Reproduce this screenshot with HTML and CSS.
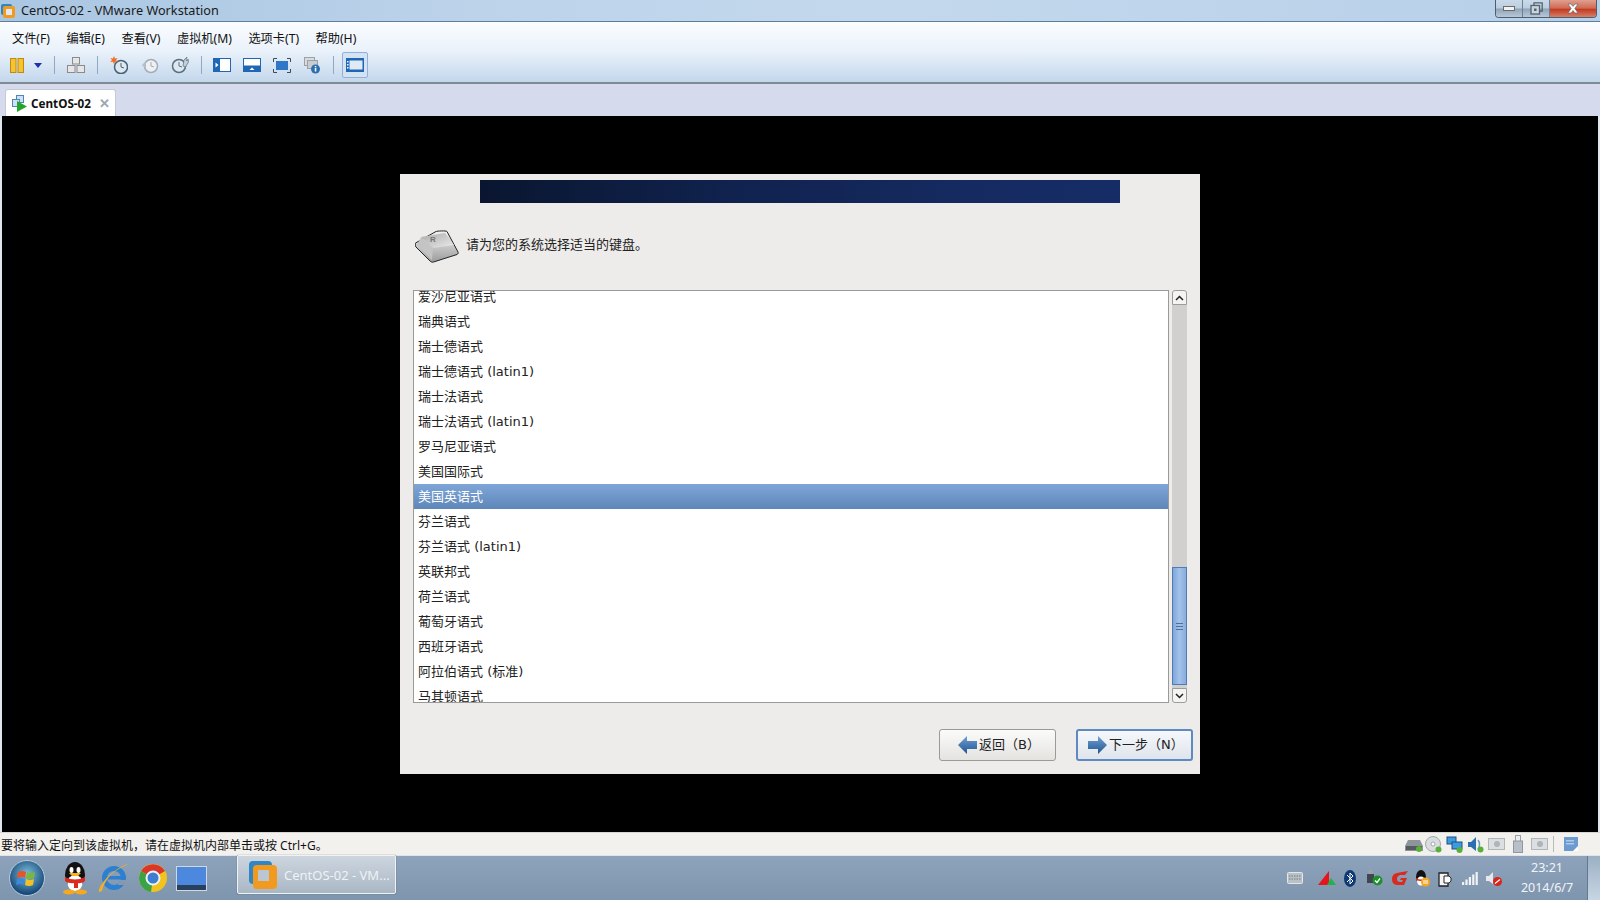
FILE: index.html
```html
<!DOCTYPE html>
<html lang="zh-CN">
<head>
    <meta charset="UTF-8">
    <title>CentOS-02 - VMware Workstation</title>
    <link rel="stylesheet" href="styles.css">
</head>
<body>

<div class="titlebar">
    <svg class="app-icon" width="16" height="16" viewBox="0 0 16 16"><rect x="1" y="1" width="11" height="11" rx="2" fill="#2f86c5"/><rect x="3" y="3" width="12" height="12" rx="2" fill="#f29a1f"/><rect x="6" y="6" width="6" height="6" fill="#dfe9f2"/></svg>
    <span class="title-text">CentOS-02 - VMware Workstation</span>
    <div class="win-buttons">
        <div class="win-btn btn-min"><span class="min-glyph"></span></div>
        <div class="win-btn btn-max">
            <svg width="13" height="13" viewBox="0 0 13 13"><path d="M4 3V.8h8.200V9H10" fill="none" stroke="#56636f" stroke-width="1.300"/><rect x="1" y="3.500" width="8.500" height="8.500" fill="#c8d4de" stroke="#56636f" stroke-width="1.300"/><rect x="4" y="6.500" width="2.500" height="2.500" fill="#56636f"/></svg>
        </div>
        <div class="win-btn btn-close">
            <svg width="14" height="11" viewBox="0 0 14 11"><path d="M2 1h3l2 2.400L9 1h3L8.800 5.500 12 10H9L7 7.600 5 10H2l3.200-4.500z" fill="#fff" stroke="#6b6b6b" stroke-width=".7"/></svg>
        </div>
    </div>
</div>

<div class="chrome">
    <div class="menubar">
        <span class="menu-item">文件(F)</span>
        <span class="menu-item">编辑(E)</span>
        <span class="menu-item">查看(V)</span>
        <span class="menu-item">虚拟机(M)</span>
        <span class="menu-item">选项卡(T)</span>
        <span class="menu-item">帮助(H)</span>
    </div>
    <div class="toolbar">
        <svg class="tool tool-pause" width="14" height="15" viewBox="0 0 14 15"><rect x=".5" y=".5" width="5.500" height="14" fill="#f5c432" stroke="#c08a10"/><rect x="8" y=".5" width="5.500" height="14" fill="#f5c432" stroke="#c08a10"/></svg>
        <svg class="tool tool-drop" width="8" height="5" viewBox="0 0 8 5"><path d="M0 0h8L4 5z" fill="#1c2fb0"/></svg>
        <span class="tool-sep sep-a"></span>
        <svg class="tool tool-net" width="18" height="16" viewBox="0 0 18 16"><g fill="#e6e6e6" stroke="#8b8b8b"><rect x="5.500" y=".5" width="7" height="6.500"/><rect x=".5" y="8.500" width="7.500" height="7"/><rect x="10" y="8.500" width="7.500" height="7"/></g></svg>
        <span class="tool-sep sep-b"></span>
        <svg class="tool tool-clock" width="18" height="18" viewBox="0 0 18 18"><circle cx="11" cy="11" r="6.500" fill="#dfe8ee" stroke="#45627c" stroke-width="1.500"/><path d="M11 7v4l3 1" fill="none" stroke="#45627c"/><path d="M4 0l1 2.500L7.500 2 6 4.200 8 6 5 5.800 4 8.500 3 5.800 0 6l2-1.800L.5 2 3 2.500z" fill="#f0702a"/></svg>
        <svg class="tool tool-clock2" width="18" height="18" viewBox="0 0 18 18"><circle cx="10" cy="10" r="6.500" fill="#eef1f3" stroke="#a3acb3" stroke-width="1.500"/><path d="M10 6v4l3 1" fill="none" stroke="#a3acb3"/><path d="M1 9l4-4v8z" fill="#b6bdc3"/></svg>
        <svg class="tool tool-clock3" width="18" height="18" viewBox="0 0 18 18"><circle cx="8" cy="10" r="6.500" fill="#dfe8ee" stroke="#55707f" stroke-width="1.500"/><path d="M8 6v4l3 1" fill="none" stroke="#55707f"/><path d="M12 10l1-6 3-3-1 3 1 1 1-2 .5 3-3 5z" fill="#c4d0d8" stroke="#55707f" stroke-width=".7"/></svg>
        <span class="tool-sep sep-c"></span>
        <svg class="tool tool-view1" width="18" height="14" viewBox="0 0 18 14"><rect width="18" height="14" fill="#1f66b5"/><rect x="7" y="1" width="10" height="12" fill="#fff"/><path d="M2.500 4.500l3 2.500-3 2.500z" fill="#fff"/></svg>
        <svg class="tool tool-view2" width="18" height="14" viewBox="0 0 18 14"><rect width="18" height="14" fill="#1f66b5"/><rect x="1" y="1" width="16" height="6.500" fill="#fff"/><path d="M6.500 12l2.500-2.500 2.500 2.500z" fill="#fff"/></svg>
        <svg class="tool tool-full" width="18" height="15" viewBox="0 0 18 15"><rect x="3" y="3" width="12" height="9" fill="#2f78c8"/><path d="M.5 4V.5H4M14 .5h3.500V4M17.500 11v3.500H14M4 14.500H.5V11" fill="none" stroke="#3d4a58"/></svg>
        <svg class="tool tool-info" width="17" height="17" viewBox="0 0 17 17"><rect x=".5" y=".5" width="10" height="8" fill="#d8dcdf" stroke="#9aa2a8"/><rect x="3.500" y="3.500" width="10" height="8" fill="#c8cdd1" stroke="#9aa2a8"/><circle cx="11.500" cy="12" r="4.500" fill="#2c6fae"/><rect x="10.800" y="11" width="1.500" height="3.500" fill="#fff"/><rect x="10.800" y="9" width="1.500" height="1.300" fill="#fff"/></svg>
        <span class="tool-sep sep-d"></span>
        <div class="tool-active">
            <svg width="18" height="14" viewBox="0 0 18 14"><rect width="18" height="14" fill="#1f66b5"/><rect x="3.500" y="2.500" width="13" height="9" fill="#dfeaf5"/><rect x="1" y="3" width="1.500" height="1.500" fill="#fff"/><rect x="1" y="6" width="1.500" height="1.500" fill="#fff"/><rect x="1" y="9" width="1.500" height="1.500" fill="#fff"/></svg>
        </div>
    </div>
</div>

<div class="tabbar">
    <div class="tab">
        <svg class="tab-icon" width="16" height="17" viewBox="0 0 16 17"><g fill="#cfe2f3" stroke="#4b86bd"><rect x="4.500" y=".5" width="7" height="7"/><rect x=".5" y="4.500" width="7" height="7"/></g><path d="M5 6l10 5.500L5 17z" fill="#25a52a"/></svg>
        <span class="tab-name">CentOS-02</span>
        <span class="tab-close">✕</span>
    </div>
</div>

<div class="vm-area">
    <div class="installer">
        <div class="banner"></div>
        <div class="prompt">
            <svg class="key-icon" width="46" height="36" viewBox="0 0 46 36">
                <defs>
                    <linearGradient id="keyTop" x1="0" y1="0" x2="1" y2="1"><stop offset="0" stop-color="#a9a9a9"/><stop offset="1" stop-color="#ececec"/></linearGradient>
                    <linearGradient id="keyFront" x1="0" y1="0" x2="0" y2="1"><stop offset="0" stop-color="#f3f3f3"/><stop offset="1" stop-color="#9b9b9b"/></linearGradient>
                </defs>
                <path d="M.5 14L21 2.500c1-.5 10-1 11 0L43 23c.5 1 0 2-1 2.500L18.500 33c-1 .5-2 0-3-.5L1 18c-1-1-1-3-.5-4z" fill="url(#keyFront)" stroke="#222"/>
                <path d="M6 8l24-4 9 12-21 3z" fill="url(#keyTop)"/>
                <path d="M6 8l12 11-1 12L2 16z" fill="#c4c4c4"/>
                <text class="key-letter" x="15" y="13">R</text>
            </svg>
            <span class="prompt-text">请为您的系统选择适当的键盘。</span>
        </div>
        <div class="list-wrap">
            <div class="list-box">
                <ul class="kb-list">
                    <li>爱沙尼亚语式</li>
                    <li>瑞典语式</li>
                    <li>瑞士德语式</li>
                    <li>瑞士德语式 (latin1)</li>
                    <li>瑞士法语式</li>
                    <li>瑞士法语式 (latin1)</li>
                    <li>罗马尼亚语式</li>
                    <li>美国国际式</li>
                    <li class="selected">美国英语式</li>
                    <li>芬兰语式</li>
                    <li>芬兰语式 (latin1)</li>
                    <li>英联邦式</li>
                    <li>荷兰语式</li>
                    <li>葡萄牙语式</li>
                    <li>西班牙语式</li>
                    <li>阿拉伯语式 (标准)</li>
                    <li>马其顿语式</li>
                </ul>
            </div>
            <div class="scrollbar">
                <div class="sb-arrow sb-up"><svg width="9" height="6" viewBox="0 0 9 6"><path d="M1 5l3.500-3.500L8 5" fill="none" stroke="#222" stroke-width="1.500"/></svg></div>
                <div class="sb-track">
                    <div class="sb-thumb"><span class="grip"></span></div>
                </div>
                <div class="sb-arrow sb-down"><svg width="9" height="6" viewBox="0 0 9 6"><path d="M1 1l3.500 3.500L8 1" fill="none" stroke="#222" stroke-width="1.500"/></svg></div>
            </div>
        </div>
        <div class="actions">
            <div class="btn">
                <svg width="19" height="20" viewBox="0 0 19 20"><defs><linearGradient id="arrowFill" x1="0" y1="0" x2="0" y2="1"><stop offset="0" stop-color="#6f9fd6"/><stop offset="1" stop-color="#22558f"/></linearGradient></defs><path d="M0 10l9-9v5h10v8H9v5z" fill="url(#arrowFill)"/></svg>
                <span class="btn-label">返回（B）</span>
            </div>
            <div class="btn btn-next">
                <svg width="19" height="20" viewBox="0 0 19 20"><path d="M19 10l-9-9v5H0v8h10v5z" fill="url(#arrowFill)"/></svg>
                <span class="btn-label">下一步（N）</span>
            </div>
        </div>
    </div>
</div>

<div class="statusbar">
    <span class="status-text">要将输入定向到该虚拟机，请在虚拟机内部单击或按 Ctrl+G。</span>
    <div class="status-icons">
        <svg class="st-icon st-hdd" width="18" height="15" viewBox="0 0 18 15"><path d="M3 3h12l3 6v5H0V9z" fill="#8d959b"/><rect x="1" y="9" width="16" height="4" fill="#545c62"/><circle cx="14" cy="12" r="3" fill="#56b03a"/></svg>
        <svg class="st-icon" width="17" height="17" viewBox="0 0 17 17"><circle cx="8" cy="8" r="7.500" fill="#d9dde0" stroke="#a4a9ad"/><circle cx="8" cy="8" r="2" fill="#fff" stroke="#a4a9ad"/><circle cx="13.500" cy="13.500" r="3" fill="#56b03a"/></svg>
        <svg class="st-icon" width="17" height="17" viewBox="0 0 17 17"><rect x="1" y="1" width="9" height="7" fill="#3b9ae0" stroke="#20507c"/><rect x="6" y="6" width="10" height="7" fill="#3b9ae0" stroke="#20507c"/><circle cx="13.500" cy="14" r="3" fill="#56b03a"/></svg>
        <svg class="st-icon" width="17" height="17" viewBox="0 0 17 17"><path d="M1 6h3l5-5v14l-5-4H1z" fill="#2c6fae"/><path d="M11 4c2 2 2 7 0 9" fill="none" stroke="#6d99c2" stroke-width="1.500"/><circle cx="13.500" cy="13.500" r="3" fill="#56b03a"/></svg>
        <svg class="st-icon cam" width="17" height="12" viewBox="0 0 17 12"><rect x=".5" y=".5" width="16" height="11" fill="#dbdfe2" stroke="#b0b5b9"/><circle cx="9" cy="6" r="3" fill="#aeb4b8"/></svg>
        <svg class="st-icon usb" width="10" height="18" viewBox="0 0 10 18"><rect x="2.500" y=".5" width="5" height="6" fill="#eee" stroke="#9ba2a8"/><rect x=".5" y="6" width="9" height="11.500" fill="#b7c0c8" stroke="#8f98a0"/></svg>
        <svg class="st-icon cam" width="17" height="12" viewBox="0 0 17 12"><rect x=".5" y=".5" width="16" height="11" fill="#dbdfe2" stroke="#b0b5b9"/><circle cx="9" cy="6" r="3" fill="#aeb4b8"/></svg>
        <span class="st-sep"></span>
        <svg class="st-icon" width="14" height="14" viewBox="0 0 14 14"><rect width="14" height="14" fill="#6d9bd0"/><rect x="2" y="3" width="8" height="1.500" fill="#aecbe9"/><rect x="2" y="6" width="8" height="1.500" fill="#aecbe9"/><path d="M14 14H9l5-5z" fill="#fff"/></svg>
    </div>
</div>

<div class="taskbar">
    <div class="orb">
        <svg width="36" height="36" viewBox="0 0 36 36">
            <defs>
                <radialGradient id="orbFill" cx=".5" cy=".4" r=".6"><stop offset="0" stop-color="#7fc1dd"/><stop offset="1" stop-color="#0e3f70"/></radialGradient>
            </defs>
            <circle cx="18" cy="18" r="17.500" fill="url(#orbFill)" stroke="#b9cbdb"/>
            <path d="M9 12q4-2 8 0l-1 6q-4-2-8 0z" fill="#e8532b"/>
            <path d="M18 12q4 2 8 0l-1 6q-4 2-8 0z" fill="#7ab73a"/>
            <path d="M8 19q4-2 8 0l-1 6q-4-2-8 0z" fill="#3d8ad8"/>
            <path d="M17 19q4 2 8 0l-1 6q-4 2-8 0z" fill="#f5c026"/>
        </svg>
    </div>
    <svg class="pin pin-qq" width="30" height="34" viewBox="0 0 30 34"><ellipse cx="15" cy="14" rx="10" ry="13" fill="#111"/><ellipse cx="15" cy="22" rx="7.500" ry="8" fill="#fff"/><ellipse cx="11.500" cy="9" rx="2" ry="3" fill="#fff"/><ellipse cx="18.500" cy="9" rx="2" ry="3" fill="#fff"/><path d="M9 12h12l-3 3h-6z" fill="#f7b51e"/><path d="M5 16q10 5 20 0v4q-5 3-7 2v5h-4v-5q-4 1-9-2z" fill="#dd2a1d"/><ellipse cx="9" cy="31" rx="6" ry="2.500" fill="#f7a81e"/><ellipse cx="21" cy="31" rx="6" ry="2.500" fill="#f7a81e"/></svg>
    <svg class="pin pin-ie" width="32" height="30" viewBox="0 0 32 30"><circle cx="16" cy="15" r="9.500" fill="none" stroke="#2d7fd0" stroke-width="5"/><rect x="10" y="13" width="15" height="3.500" fill="#2d7fd0"/><rect x="20" y="17" width="8" height="5" fill="#8499b1"/><path d="M1 29C-1 22 20 2 31 1c-5 2-9 4-12 6C8 14 5 24 4 28z" fill="#eeb02c"/></svg>
    <svg class="pin pin-chrome" width="28" height="28" viewBox="0 0 28 28"><circle cx="14" cy="14" r="14" fill="#f2c31d"/><path d="M14 14L2 7a14 14 0 0 1 24 0z" fill="#d9362c"/><path d="M14 14L2 7a14 14 0 0 0 10 21z" fill="#3aa346"/><circle cx="14" cy="14" r="6.500" fill="#3c7fd0" stroke="#eef2f5" stroke-width="2"/></svg>
    <svg class="pin pin-desk" width="31" height="25" viewBox="0 0 31 25"><rect width="31" height="25" fill="#cfd9e3"/><rect x="1" y="1" width="29" height="18" fill="#4b88de"/><rect x="1" y="19" width="29" height="5" fill="#2a3f5c"/></svg>
    <div class="task-btn">
        <svg width="30" height="30" viewBox="0 0 30 30"><rect x="1" y="1" width="23" height="23" rx="4" fill="#2f86c5"/><rect x="5" y="5" width="24" height="24" rx="4" fill="#f29a1f"/><rect x="10" y="10" width="11" height="11" fill="#bac6d1"/></svg>
        <span class="task-name">CentOS-02 - VM...</span>
    </div>
    <div class="tray">
        <svg class="tray-key" width="16" height="12" viewBox="0 0 16 12"><rect x=".5" y=".5" width="15" height="11" rx="1" fill="#b9c0c6" stroke="#e3e6e8"/><path d="M2 4h12M2 7h12" stroke="#6e7a85" stroke-dasharray="1.500 1"/></svg>
        <svg class="tray-tri" width="18" height="14" viewBox="0 0 18 14"><path d="M0 14L11 0v14z" fill="#e8141c"/><path d="M9 14l4-7 5 7z" fill="#22b14c"/></svg>
        <svg class="tray-bt" width="12" height="17" viewBox="0 0 12 17"><ellipse cx="6" cy="8.500" rx="6" ry="8.500" fill="#0d3a74"/><path d="M3 5l6 6-3 3V3l3 3-6 6" fill="none" stroke="#fff"/></svg>
        <svg class="tray-pow" width="17" height="16" viewBox="0 0 17 16"><rect x="1" y="4" width="7" height="9" fill="#3e4650"/><rect x="2.500" y="0" width="4" height="4" fill="#9aa3aa"/><circle cx="11.500" cy="10.500" r="5" fill="#1f8f2c"/><path d="M9 10.500l2 2 3-4" fill="none" stroke="#fff" stroke-width="1.300"/></svg>
        <svg class="tray-g" width="16" height="15" viewBox="0 0 16 15"><path d="M10 1L16 0l-3 4H8Q5 5 5 8t3 3h2l1-2H8l1-2h6l-3 7H6Q0 14 0 8q0-5 5-6z" fill="#d92a1c"/></svg>
        <svg class="tray-qq" width="16" height="17" viewBox="0 0 16 17"><ellipse cx="7" cy="7" rx="5" ry="7" fill="#111"/><ellipse cx="7" cy="11" rx="4" ry="4.500" fill="#fff"/><path d="M2 8q5 3 10 0v2q-5 2-10 0z" fill="#dd2a1d"/><circle cx="11.500" cy="12" r="4.500" fill="#f5a623"/><path d="M9 11h5M9 13h5" stroke="#fff"/></svg>
        <svg class="tray-plug" width="14" height="17" viewBox="0 0 14 17"><path d="M1 3h9v13H1z" fill="#f5f5f5" stroke="#222" stroke-width="1.300"/><path d="M6 6h5l2 2v3l-2 2H6z" fill="#fff" stroke="#222"/></svg>
        <svg class="tray-sig" width="16" height="13" viewBox="0 0 16 13"><g fill="#f1f3f5"><rect x="0" y="10" width="2.200" height="3"/><rect x="3.400" y="7.500" width="2.200" height="5.500"/><rect x="6.800" y="5" width="2.200" height="8"/><rect x="10.200" y="2.500" width="2.200" height="10.500"/><rect x="13.600" y="0" width="2.200" height="13"/></g></svg>
        <svg class="tray-vol" width="16" height="15" viewBox="0 0 16 15"><path d="M0 5h3l4-4v12l-4-3H0z" fill="#e6e9eb"/><circle cx="11.500" cy="10.500" r="4.500" fill="#d9241b"/><path d="M9 12.500l5-4" stroke="#fff" stroke-width="1.300"/></svg>
        <div class="clock">
            <span>23:21</span>
            <span>2014/6/7</span>
        </div>
    </div>
    <div class="show-desktop"></div>
</div>

</body>
</html>
```

FILE: styles.css
```css
* {
    box-sizing: border-box;
}

html, body {
    margin: 0;
    padding: 0;
}

body {
    width: 1600px;
    height: 900px;
    overflow: hidden;
    display: flex;
    flex-direction: column;
    background-color: #000;
    font-family: "Noto Sans", "Noto Sans CJK SC", sans-serif;
    font-size: 12px;
    color: #111;
}

/* title bar */
.titlebar {
    height: 22px;
    flex: none;
    display: flex;
    align-items: center;
    background: linear-gradient(90deg, #a9c6e2 0%, #bcd3ea 30%, #c3d8ec 55%, #b7d0e9 100%);
    border-bottom: 1px solid #5f7e9c;
}

.app-icon {
    margin-right: 5px;
}

.title-text {
    font-size: 12.700px;
    margin-top: -1px;
    color: #1a1a1a;
}

.win-buttons {
    margin-left: auto;
    margin-right: 3px;
    height: 18px;
    align-self: flex-start;
    display: flex;
    border: 1px solid #4f5e6c;
    border-top: none;
    border-radius: 0 0 4px 4px;
    overflow: hidden;
}

.win-btn {
    height: 17px;
    display: flex;
    align-items: center;
    justify-content: center;
}

.btn-min, .btn-max {
    width: 27px;
    background: linear-gradient(#c8d9e9 0%, #bccddd 48%, #8fa3b8 52%, #b8c8d8 100%);
    border-right: 1px solid #6d7f90;
}

.btn-close {
    width: 46px;
    background: linear-gradient(#e0a090 0%, #cf6a52 48%, #c23a22 55%, #d67f68 100%);
}

.min-glyph {
    width: 12px;
    height: 5px;
    background-color: #f2f2f2;
    border: 1px solid #6b6b6b;
}

/* menu + toolbar */
.chrome {
    height: 62px;
    flex: none;
    background: linear-gradient(#fbfdff 0%, #e9f1fa 50%, #c3d7ec 100%);
    border-bottom: 2px solid #7f8a95;
}

.menubar {
    height: 27px;
    padding: 7px 0 0 12px;
    display: flex;
    gap: 16.500px;
    font-size: 12.200px;
    line-height: 20px;
}

.toolbar {
    height: 32px;
    display: flex;
    align-items: center;
    padding-left: 10px;
}

.tool {
    flex: none;
}

.tool-drop { margin-left: 10px; }
.tool-net { margin-left: 12px; }
.tool-clock { margin-left: 12px; }
.tool-clock2 { margin-left: 13px; }
.tool-clock3 { margin-left: 12px; }
.tool-view1 { margin-left: 11px; }
.tool-view2 { margin-left: 12px; }
.tool-full { margin-left: 12px; }
.tool-info { margin-left: 13px; }

.tool-sep {
    width: 1px;
    height: 18px;
    background-color: #8fa9c4;
    flex: none;
}

.sep-a { margin-left: 12px; }
.sep-b { margin-left: 12px; }
.sep-c { margin-left: 12px; }
.sep-d { margin-left: 12px; }

.tool-active {
    width: 26px;
    height: 26px;
    margin-left: 8px;
    display: flex;
    align-items: center;
    justify-content: center;
    background-color: #d3e3f4;
    border: 1px solid #8fb2d6;
    border-radius: 2px;
}

/* tabs */
.tabbar {
    height: 32px;
    flex: none;
    padding: 5px 0 0 5px;
    background-color: #d5daec;
}

.tab {
    width: 111px;
    height: 27px;
    display: flex;
    align-items: center;
    padding-left: 6px;
    background-color: #fff;
    border: 1px solid #c3cad6;
    border-bottom: none;
    border-radius: 3px 3px 0 0;
}

.tab-name {
    margin-left: 3px;
    font-weight: 700;
    font-size: 11.700px;
    color: #111;
}

.tab-close {
    margin-left: 8px;
    font-size: 13px;
    font-weight: 700;
    color: #9aa6b4;
}

/* guest screen */
.vm-area {
    height: 716px;
    flex: none;
    display: flex;
    align-items: center;
    justify-content: center;
    background-color: #000;
    border-left: 2px solid #dfe6ee;
    border-right: 2px solid #dfe6ee;
}

.installer {
    width: 800px;
    height: 600px;
    padding-top: 6px;
    background-color: #edecea;
    font-family: "DejaVu Sans", "Noto Sans CJK SC", sans-serif;
    font-size: 13px;
    color: #222;
}

.banner {
    width: 640px;
    height: 23px;
    margin-left: 80px;
    background: linear-gradient(90deg, #0a1630 0%, #10224e 40%, #152a60 75%, #162c66 100%);
}

.prompt {
    height: 87px;
    padding-left: 15px;
    display: flex;
    align-items: center;
}

.key-icon {
    flex: none;
}

.key-letter {
    font-family: "Liberation Sans", sans-serif;
    font-size: 8px;
    font-weight: 700;
    fill: #777;
}

.prompt-text {
    margin-left: 5px;
    margin-top: -6px;
}

.list-wrap {
    display: flex;
    height: 413px;
    margin-left: 13px;
}

.list-box {
    width: 756px;
    height: 413px;
    overflow: hidden;
    background-color: #fff;
    border: 1px solid #9a9a9a;
}

.kb-list {
    list-style: none;
    margin: -7px 0 0;
    padding: 0;
}

.kb-list li {
    height: 25px;
    line-height: 25px;
    padding-left: 4px;
}

.kb-list li.selected {
    background: linear-gradient(#7fa6d8, #5f86b8);
    color: #fff;
}

.scrollbar {
    width: 15px;
    margin-left: 3px;
    display: flex;
    flex-direction: column;
}

.sb-arrow {
    height: 15px;
    flex: none;
    display: flex;
    align-items: center;
    justify-content: center;
    background-color: #f4f4f3;
    border: 1px solid #9c9c9c;
}

.sb-up {
    border-radius: 3px 3px 0 0;
}

.sb-down {
    border-radius: 0 0 3px 3px;
}

.sb-track {
    flex: 1;
    display: flex;
    flex-direction: column;
    justify-content: flex-end;
    background-color: #d2d0ce;
    padding-bottom: 3px;
}

.sb-thumb {
    height: 118px;
    display: flex;
    align-items: center;
    justify-content: center;
    background: linear-gradient(90deg, #7fa7da, #a3c2ea 50%, #87addd);
    border: 1px solid #4f7cb4;
}

.grip {
    width: 7px;
    height: 7px;
    border-top: 1px solid #4d7099;
    border-bottom: 1px solid #4d7099;
    background: linear-gradient(transparent 2px, #4d7099 2px, #4d7099 3px, transparent 3px);
}

.actions {
    display: flex;
    justify-content: flex-end;
    gap: 20px;
    padding: 26px 7px 0 0;
}

.btn {
    width: 117px;
    height: 32px;
    display: flex;
    align-items: center;
    padding-left: 18px;
    gap: 2px;
    background: linear-gradient(#fbfbfa, #e4e3e0);
    border: 1px solid #9a9a98;
    border-radius: 3px;
}

.btn-label {
    margin-top: -3px;
    white-space: nowrap;
}

.btn-next {
    padding-left: 10px;
    border: 2px solid #5d8ac0;
    background: linear-gradient(#f6f8fa, #dfe5ec);
}

/* status bar */
.statusbar {
    height: 23px;
    flex: none;
    display: flex;
    align-items: center;
    background-color: #f3f1ee;
    border-top: 1px solid #d8d6d2;
}

.status-text {
    font-size: 12px;
    padding: 2px 0 0 1px;
}

.status-icons {
    margin-left: auto;
    margin-right: 22px;
    display: flex;
    align-items: center;
    gap: 4px;
}

.status-icons .st-hdd {
    margin-right: -2px;
}

.status-icons .usb {
    margin: 0 4px;
}

.st-sep {
    width: 1px;
    height: 16px;
    background-color: #bbb;
    margin: 0 6px 0 1px;
}

/* windows taskbar */
.taskbar {
    flex: 1;
    display: flex;
    align-items: center;
    background: linear-gradient(#8ea3bb, #7e95ae);
    border-top: 1px solid #e0e4e8;
    padding-left: 9px;
}

.orb {
    width: 36px;
    height: 36px;
    flex: none;
}

.pin {
    flex: none;
}

.pin-qq { margin-left: 15px; }
.pin-ie { margin-left: 8px; }
.pin-chrome { margin-left: 9px; }
.pin-desk { margin-left: 9px; }

.task-btn {
    width: 159px;
    height: 39px;
    margin-left: 30px;
    margin-top: -7px;
    display: flex;
    align-items: center;
    padding-left: 10px;
    gap: 6px;
    background: linear-gradient(#cdd6df, #a9b7c5);
    border: 1px solid #f0f3f6;
    border-radius: 2px;
    box-shadow: 0 0 1px #333;
}

.task-name {
    color: #eef2f5;
    font-size: 13px;
    white-space: nowrap;
}

.tray {
    margin-left: auto;
    display: flex;
    align-items: center;
    height: 100%;
}

.tray svg {
    flex: none;
}

.tray .tray-tri { margin-left: 15px; }
.tray .tray-bt { margin-left: 8px; }
.tray .tray-pow { margin-left: 10px; }
.tray .tray-g { margin-left: 9px; }
.tray .tray-qq { margin-left: 6px; }
.tray .tray-plug { margin-left: 8px; }
.tray .tray-sig { margin-left: 10px; }
.tray .tray-vol { margin-left: 8px; }

.clock {
    width: 80px;
    margin-left: 5px;
    display: flex;
    flex-direction: column;
    align-items: center;
    gap: 2px;
    color: #f2f5f7;
    font-size: 12.500px;
    line-height: 18px;
}

.show-desktop {
    width: 13px;
    height: 100%;
    background: linear-gradient(#9cb0c4, #c7d6e4);
    border-left: 1px solid #66788a;
}
```
